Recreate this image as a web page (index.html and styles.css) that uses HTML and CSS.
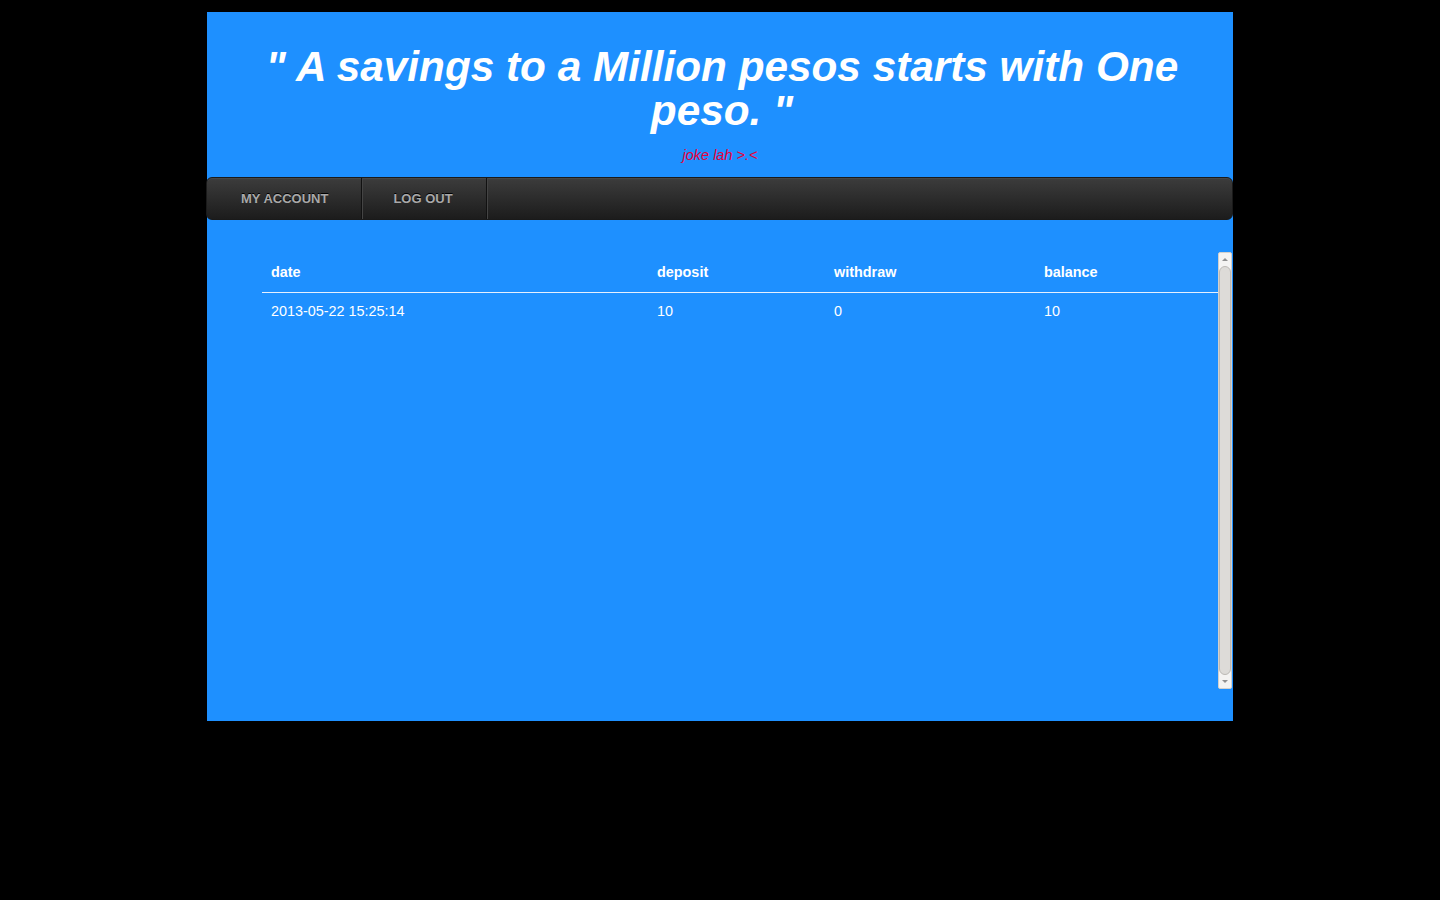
FILE: index.html
```html
<!DOCTYPE html>
<html>
<head>
<meta charset="utf-8">
<title>Savings</title>
<link rel="stylesheet" href="styles.css">
</head>
<body>
<div class="page">
  <header class="masthead">
    <h1 class="quote">" A savings to a Million pesos starts with One peso. "</h1>
    <p class="joke">joke lah &gt;.&lt;</p>
  </header>
  <nav class="nav">
    <a class="nav-item" href="#">MY ACCOUNT</a>
    <a class="nav-item" href="#">LOG OUT</a>
  </nav>
  <div class="scrollbox">
    <div class="scroller">
      <table class="ledger">
        <thead>
          <tr>
            <th class="c-date">date</th>
            <th class="c-dep">deposit</th>
            <th class="c-wd">withdraw</th>
            <th class="c-bal">balance</th>
          </tr>
        </thead>
        <tbody>
          <tr>
            <td>2013-05-22 15:25:14</td>
            <td>10</td>
            <td>0</td>
            <td>10</td>
          </tr>
        </tbody>
      </table>
    </div>
    <div class="scrollbar">
      <div class="sb-btn sb-up"><span class="arrow-up"></span></div>
      <div class="sb-thumb"></div>
      <div class="sb-btn sb-down"><span class="arrow-down"></span></div>
    </div>
  </div>
</div>
</body>
</html>
```
FILE: styles.css
```css
html, body {
  margin: 0;
  padding: 0;
  background: #000;
}
body {
  font-family: "Liberation Sans", Arial, sans-serif;
  padding-top: 12px;
}
.page {
  width: 1026px;
  height: 709px;
  margin-left: 207px;
  background: #1e90ff;
  box-sizing: border-box;
  padding-top: 33px;
}
.masthead {
  text-align: center;
}
.quote {
  margin: 0 auto;
  width: 960px;
  padding-left: 4px;
  font-size: 42.3px;
  line-height: 44px;
  font-weight: bold;
  font-style: italic;
  color: #fff;
}
.joke {
  margin: 14px 0 0;
  font-size: 14.5px;
  line-height: 16px;
  font-style: italic;
  color: #e8003a;
}
.nav {
  margin: 14px 0 0 -1px;
  width: 1027px;
  height: 43px;
  box-sizing: border-box;
  display: flex;
  background: linear-gradient(#3c3c3c, #1c1c1c);
  border: 1px solid #1a1a1a;
  border-radius: 6px;
  box-shadow: inset 0 1px 0 rgba(255,255,255,0.06);
}
.nav-item {
  display: flex;
  align-items: center;
  padding: 0 33px 0 34px;
  height: 100%;
  font-size: 13px;
  font-weight: bold;
  color: #a9a9a9;
  text-decoration: none;
  text-shadow: 0 -1px 0 #000;
  border-right: 1px solid #111;
  box-shadow: 1px 0 0 #444;
}
.nav-item:nth-child(2) {
  padding: 0 33px 0 31px;
}
.scrollbox {
  margin: 32px 0 0 55px;
  width: 970px;
  height: 437px;
  display: flex;
}
.scroller {
  flex: 1;
  overflow: hidden;
}
.scrollbar {
  width: 14px;
  box-sizing: border-box;
  display: flex;
  flex-direction: column;
  background: #f4f3f2;
  border: 1px solid #d2d0cd;
  border-radius: 2px;
}
.sb-btn {
  height: 13px;
  display: flex;
  align-items: center;
  justify-content: center;
  flex: none;
}
.arrow-up {
  width: 0;
  height: 0;
  border-left: 3px solid transparent;
  border-right: 3px solid transparent;
  border-bottom: 3px solid #909090;
}
.arrow-down {
  width: 0;
  height: 0;
  border-left: 3px solid transparent;
  border-right: 3px solid transparent;
  border-top: 3px solid #909090;
}
.sb-thumb {
  flex: 1;
  background: #dddbd8;
  border: 1px solid #bcb9b5;
  border-radius: 6px;
}
.ledger {
  width: 100%;
  border-collapse: collapse;
  color: #fff;
  font-size: 14.4px;
}
.ledger th {
  text-align: left;
  font-weight: bold;
  padding: 12px 9px 12px;
  line-height: 16px;
  border-bottom: 1px solid #e6f0ff;
}
.ledger td {
  padding: 10px 9px;
  line-height: 16px;
}
.c-date { width: 368px; }
.c-dep { width: 159px; }
.c-wd { width: 192px; }
```
